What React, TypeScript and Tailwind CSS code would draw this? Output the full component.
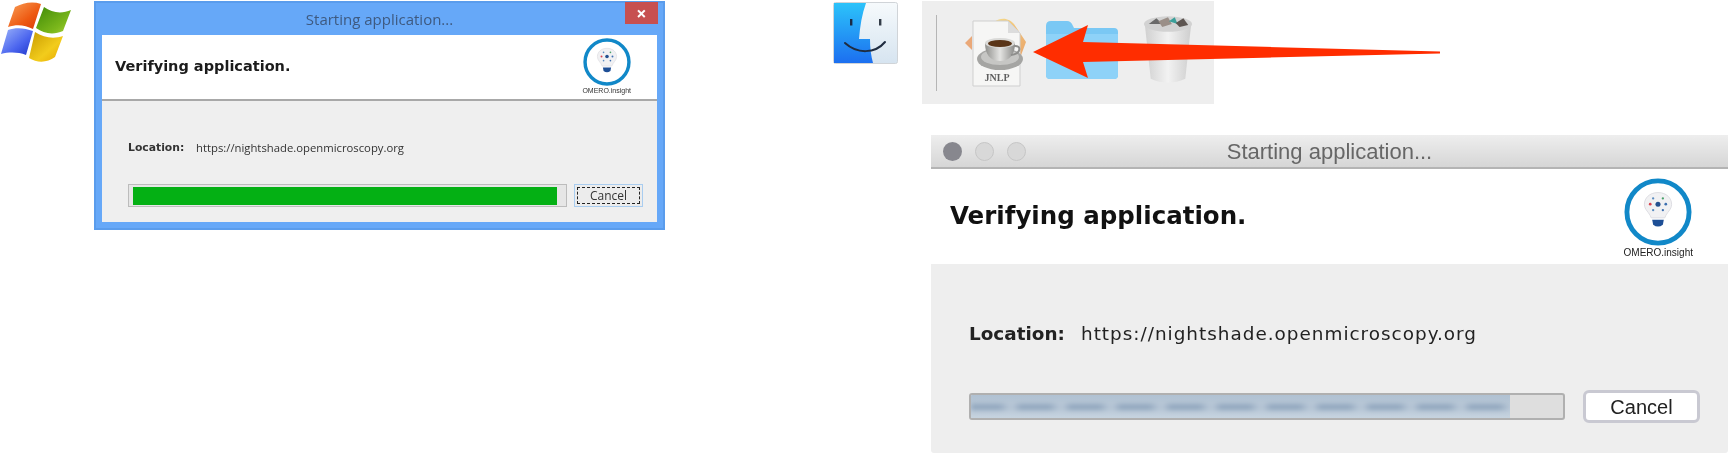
function WindowsLogo() {
  return (
    <svg viewBox="0 0 72 64" className="h-[64px] w-[72px] shrink-0">
      <defs>
        <linearGradient id="winRed" x1="0" y1="0" x2="1" y2="1">
          <stop offset="0" stopColor="#f9a15a" />
          <stop offset="0.6" stopColor="#ee5a12" />
          <stop offset="1" stopColor="#d63a08" />
        </linearGradient>
        <linearGradient id="winGreen" x1="0" y1="0" x2="1" y2="1">
          <stop offset="0" stopColor="#3f8a06" />
          <stop offset="0.7" stopColor="#7cb81c" />
          <stop offset="1" stopColor="#a8d03c" />
        </linearGradient>
        <linearGradient id="winBlue" x1="0" y1="0" x2="1" y2="1">
          <stop offset="0" stopColor="#9cb4fa" />
          <stop offset="0.6" stopColor="#4a64ee" />
          <stop offset="1" stopColor="#1e36c8" />
        </linearGradient>
        <linearGradient id="winYellow" x1="0" y1="0" x2="1" y2="1">
          <stop offset="0" stopColor="#c79a00" />
          <stop offset="0.6" stopColor="#f2cc1c" />
          <stop offset="1" stopColor="#e8a800" />
        </linearGradient>
      </defs>
      <path d="M15 7 C23 3 32 1 41 4 L33 29 C25 25 17 24 8 27 Z" fill="url(#winRed)" />
      <path d="M44 7 C52 13 62 14 71 10 L63 31 C54 35 44 34 36 28 Z" fill="url(#winGreen)" />
      <path d="M8 30 C16 27 25 28 33 31 L26 55 C18 52 9 52 1 54 Z" fill="url(#winBlue)" />
      <path d="M35 32 C44 38 54 39 63 36 L55 57 C47 63 37 63 29 58 Z" fill="url(#winYellow)" />
    </svg>
  )
}

function BulbLogo({ className }: { className: string }) {
  return (
    <svg viewBox="0 0 70 70" className={className}>
      <circle cx="35" cy="35" r="32" fill="#fff" stroke="#1188c8" strokeWidth="5" />
      <path d="M35 15 C26 15 21 21 21 27 C21 33 26 35 28 41 L42 41 C44 35 49 33 49 27 C49 21 44 15 35 15 Z" fill="#f1f1f3" stroke="#dddde2" />
      <path d="M29 43 L41 43 L40 48 Q35 52 30 48 Z" fill="#1e4f96" />
      <circle cx="35" cy="27" r="2.6" fill="#24508f" />
      <circle cx="27" cy="27" r="1.4" fill="#d9434e" />
      <circle cx="43" cy="27" r="1.4" fill="#3c6fb0" />
      <circle cx="30" cy="21" r="1.2" fill="#5a8cc0" />
      <circle cx="40" cy="21" r="1.2" fill="#49a06a" />
      <circle cx="30" cy="33" r="1.2" fill="#5a8cc0" />
      <circle cx="40" cy="33" r="1.2" fill="#3c6fb0" />
    </svg>
  )
}

function FinderIcon() {
  return (
    <svg viewBox="0 0 65 62" className="mt-[2px] h-[62px] w-[65px] shrink-0">
      <defs>
        <linearGradient id="finderBlue" x1="0" y1="0" x2="0" y2="1">
          <stop offset="0" stopColor="#2cc3fa" />
          <stop offset="1" stopColor="#1c6ff0" />
        </linearGradient>
        <linearGradient id="finderPale" x1="0" y1="0" x2="0" y2="1">
          <stop offset="0" stopColor="#f6fafc" />
          <stop offset="1" stopColor="#d6e4f0" />
        </linearGradient>
      </defs>
      <rect x="0.5" y="0.5" width="64" height="61" rx="2" fill="url(#finderPale)" stroke="#d0d4d8" />
      <path d="M1 1 L33 1 C29 12 27 24 26 37 L37 37 C37 46 38 54 40 61 L1 61 Z" fill="url(#finderBlue)" />
      <rect x="17" y="17" width="2.4" height="6.5" fill="#1a2a44" />
      <rect x="46" y="17" width="2.4" height="6.5" fill="#333c48" />
      <path d="M12 41 C24 52 42 52 52 40" fill="none" stroke="#1f2c40" strokeWidth="2" strokeLinecap="round" />
    </svg>
  )
}

function JnlpIcon() {
  return (
    <svg viewBox="0 0 62 72" className="h-[72px] w-[62px] shrink-0">
      <defs>
        <linearGradient id="cupBody" x1="0" y1="0" x2="1" y2="0">
          <stop offset="0" stopColor="#8f8f8c" />
          <stop offset="0.5" stopColor="#e4e4e2" />
          <stop offset="1" stopColor="#8a8a88" />
        </linearGradient>
        <linearGradient id="fan" x1="0" y1="0" x2="1" y2="1">
          <stop offset="0" stopColor="#f6dc8c" />
          <stop offset="1" stopColor="#e9a468" />
        </linearGradient>
      </defs>
      <path d="M1 27 L8 20 L8 34 Z" fill="#eaa878" />
      <path d="M30 6 C38 0 46 3 50 8 L62 26 L56 42 L44 20 Z" fill="url(#fan)" />
      <path d="M9 5 L44 5 L56 17 L56 70 L9 70 Z" fill="#f6f6f5" stroke="#cfcfcf" />
      <path d="M44 5 L44 17 L56 17 Z" fill="#dcdcdc" />
      <ellipse cx="36" cy="43" rx="23" ry="11" fill="#a5a5a3" />
      <ellipse cx="36" cy="41" rx="19" ry="8" fill="#c6c6c4" />
      <path d="M21 27 L51 27 C51 38 46 45 36 45 C26 45 21 38 21 27 Z" fill="url(#cupBody)" />
      <path d="M50 30 C58 29 57 38 47 39" fill="none" stroke="#8e8e8c" strokeWidth="2" />
      <ellipse cx="36" cy="27" rx="15" ry="5" fill="#dadad8" />
      <ellipse cx="36" cy="27.5" rx="12" ry="3.6" fill="#5a3518" />
      <text x="33" y="65" textAnchor="middle" fontFamily="'Liberation Serif', serif" fontWeight="700" fontSize="10" fill="#5f5f5f">JNLP</text>
    </svg>
  )
}

function FolderIcon() {
  return (
    <svg viewBox="0 0 74 60" className="h-[60px] w-[74px] shrink-0">
      <path d="M1 6 Q1 1 6 1 L22 1 Q26 1 28 6 L29 8 L69 8 Q73 8 73 12 L73 55 Q73 59 69 59 L5 59 Q1 59 1 55 Z" fill="#7ac8f4" />
      <path d="M1 14 L73 14 L73 55 Q73 59 69 59 L5 59 Q1 59 1 55 Z" fill="#8ed2f8" />
    </svg>
  )
}

function TrashIcon() {
  return (
    <svg viewBox="0 0 52 72" className="h-[70px] w-[50px] shrink-0">
      <defs>
        <linearGradient id="binBody" x1="0" y1="0" x2="1" y2="0">
          <stop offset="0" stopColor="#d0d0d0" />
          <stop offset="0.5" stopColor="#f2f2f2" />
          <stop offset="1" stopColor="#cecece" />
        </linearGradient>
      </defs>
      <path d="M2 10 L50 10 L44 66 Q26 74 8 66 Z" fill="url(#binBody)" />
      <ellipse cx="26" cy="9" rx="25" ry="8" fill="#d2d2d2" />
      <path d="M6 9 L14 3 L20 9 Z" fill="#6a6a6a" />
      <path d="M16 6 L26 2 L30 9 L20 12 Z" fill="#9a8f88" />
      <path d="M27 6 L33 2 L36 9 Z" fill="#3aa09a" />
      <path d="M34 8 L42 3 L47 10 L38 12 Z" fill="#5c5450" />
    </svg>
  )
}

export default function App() {
  return (
    <div className="relative flex h-[453px] w-[1728px] overflow-hidden bg-white blur-[0.5px]">
      {/* Windows */}
      <div className="flex w-[833px] shrink-0 items-start">
        <WindowsLogo />
        <div className="ml-[22px] mt-[1px] flex h-[229px] w-[571px] flex-col border-2 border-[#5a9cec] bg-[#66a8f8] px-[6px] pb-[6px] font-['Open_Sans',sans-serif]">
          <div className="relative flex h-[32px] shrink-0 items-center justify-center">
            <span className="text-[15px] text-[#3e5a80]">Starting application...</span>
            <div className="absolute right-[-1px] top-[-1px] flex h-[22px] w-[33px] items-center justify-center bg-[#c75050] text-[18px] font-bold leading-none text-white">×</div>
          </div>
          <div className="flex h-[66px] shrink-0 items-center justify-between border-b-2 border-[#a8a8a8] bg-white pl-[13px] pr-[26px]">
            <span className="font-['DejaVu_Sans',sans-serif] text-[14.5px] font-bold text-[#1c1c1c]">Verifying application.</span>
            <div className="flex flex-col items-center">
              <BulbLogo className="h-[48px] w-[48px]" />
              <span className="font-['Liberation_Sans',sans-serif] text-[7px] leading-[10px] text-[#333]">OMERO.insight</span>
            </div>
          </div>
          <div className="flex flex-1 flex-col bg-[#efefef] pl-[26px] pr-[14px] pt-[40px]">
            <div className="flex items-center text-[11.3px] leading-[14px] text-[#333]">
              <span className="w-[68px] font-['DejaVu_Sans',sans-serif] text-[10.8px] font-bold">Location:</span>
              <span className="font-['Open_Sans',sans-serif]">https://nightshade.openmicroscopy.org</span>
            </div>
            <div className="mt-[29px] flex items-center">
              <div className="flex h-[23px] w-[439px] items-center border border-[#bcbcbc] bg-[#e6e6e6] px-[4px]">
                <div className="h-[18px] w-[424px] bg-[#04b014]" />
              </div>
              <div className="ml-[7px] flex h-[23px] w-[69px] items-center justify-center border border-[#a9cdf0] bg-[#ececec] p-[2px]">
                <div className="flex h-full w-full items-center justify-center border border-dashed border-[#222] text-[12px] text-[#333]">Cancel</div>
              </div>
            </div>
          </div>
        </div>
      </div>

      {/* Mac */}
      <div className="flex flex-1 flex-col">
        <div className="flex items-start">
          <FinderIcon />
          <div className="ml-[24px] mt-[1px] flex h-[103px] w-[292px] items-start bg-[#eeeeee]">
            <div className="ml-[14px] mt-[14px] h-[76px] w-[1px] shrink-0 bg-[#b5b5b5]" />
            <div className="ml-[27px] mt-[15px]"><JnlpIcon /></div>
            <div className="ml-[19px] mt-[19px]"><FolderIcon /></div>
            <div className="ml-[24px] mt-[14px]"><TrashIcon /></div>
          </div>
        </div>

        <div className="ml-[98px] mt-[31px] flex h-[318px] w-[797px] flex-col rounded-b-[3px] bg-[#eeeeee]">
          <div className="relative flex h-[34px] shrink-0 items-center justify-center rounded-t-[4px] border-b-2 border-[#b4b4b4] bg-gradient-to-b from-[#eeeeee] to-[#d6d6d6]">
            <div className="absolute left-[12px] flex items-center gap-[13px]">
              <div className="h-[19px] w-[19px] rounded-full bg-[#87878e]" />
              <div className="h-[19px] w-[19px] rounded-full border border-[#c6c6c6] bg-[#d8d8d8]" />
              <div className="h-[19px] w-[19px] rounded-full border border-[#c6c6c6] bg-[#d8d8d8]" />
            </div>
            <span className="font-['Liberation_Sans',sans-serif] text-[22px] text-[#666]">Starting application...</span>
          </div>
          <div className="flex h-[95px] shrink-0 items-center justify-between bg-white pl-[19px] pr-[35px]">
            <span className="font-['DejaVu_Sans',sans-serif] text-[24.5px] font-bold text-[#111]">Verifying application.</span>
            <div className="flex flex-col items-center pt-[4px]">
              <BulbLogo className="h-[68px] w-[68px]" />
              <span className="font-['Liberation_Sans',sans-serif] text-[10px] leading-[14px] text-[#222]">OMERO.insight</span>
            </div>
          </div>
          <div className="flex flex-1 flex-col pl-[38px] pt-[57px]">
            <div className="flex items-center font-['DejaVu_Sans',sans-serif] text-[18.4px] leading-[26px] text-[#222]">
              <span className="w-[112px] font-bold">Location:</span>
              <span className="tracking-[1px]">https://nightshade.openmicroscopy.org</span>
            </div>
            <div className="mt-[43px] flex items-center">
              <div className="h-[27px] w-[596px] overflow-hidden rounded-[3px] border-2 border-[#b0b0b0] bg-[#dedede]">
                <div className="relative flex h-full w-[539px] items-center overflow-hidden bg-gradient-to-b from-[#b0c1d2] to-[#c6d3df]">
                  <div className="h-[6px] w-full bg-[repeating-linear-gradient(90deg,#8ea4bc_0px,#8ea4bc_28px,#b4c4d4_38px,#b4c4d4_42px,#8ea4bc_50px)] blur-[2.5px]" />
                </div>
              </div>
              <div className="ml-[18px] flex h-[33px] w-[117px] items-center justify-center rounded-[6px] border-[3px] border-[#c9c9d2] bg-white font-['Liberation_Sans',sans-serif] text-[20px] text-[#222]">Cancel</div>
            </div>
          </div>
        </div>
      </div>

      {/* red arrow over the dock */}
      <svg viewBox="0 0 420 60" className="absolute left-[1030px] top-[22px] h-[60px] w-[420px]">
        <polygon points="3,30 58,3 53,20 410,29.5 410,31.5 53,40 58,56" fill="#ff2d00" />
      </svg>
    </div>
  )
}
